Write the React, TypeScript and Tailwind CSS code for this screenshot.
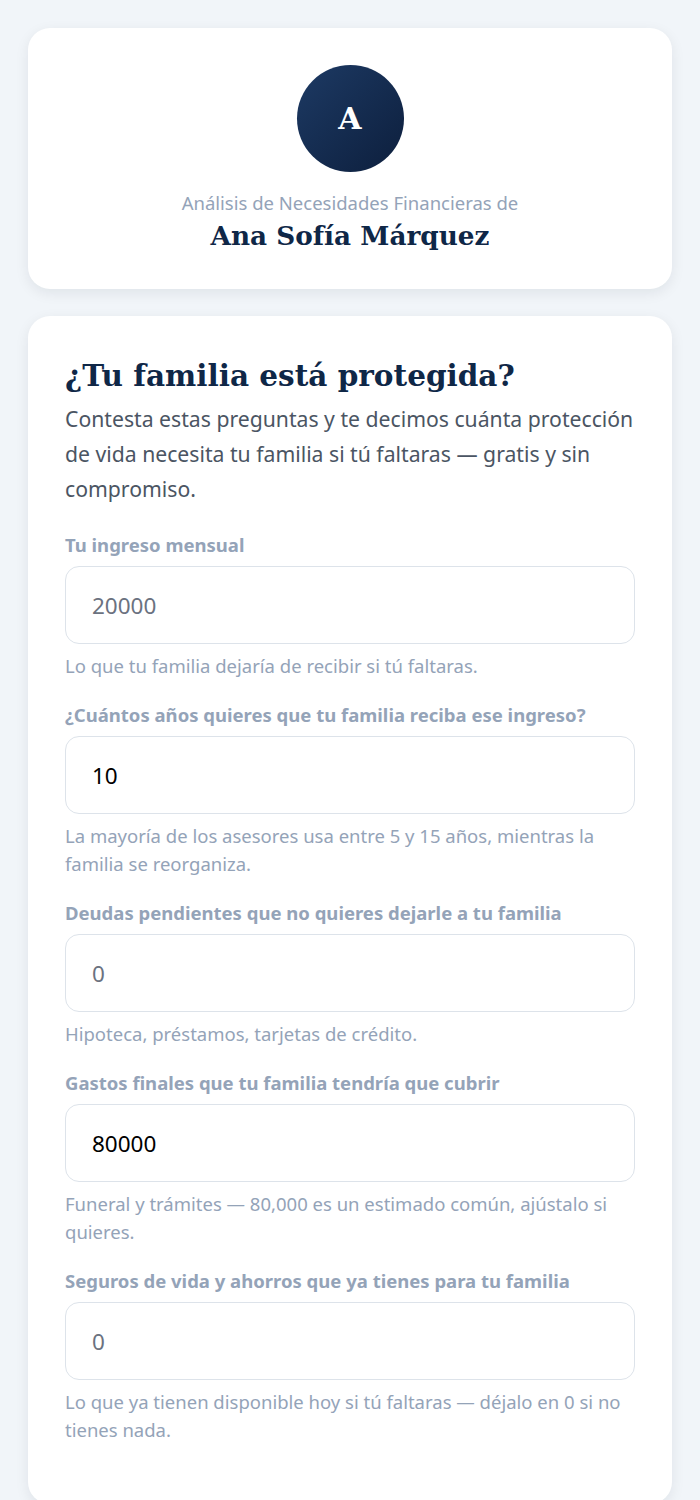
import React from "react";

const sans = "font-['Noto_Sans',sans-serif]";
const serif = "font-['DejaVu_Serif',serif]";

type Field = {
  label: string;
  value?: string;
  placeholder?: string;
  help: string;
};

const fields: Field[] = [
  { label: "Tu ingreso mensual", placeholder: "20000", help: "Lo que tu familia dejaría de recibir si tú faltaras." },
  {
    label: "¿Cuántos años quieres que tu familia reciba ese ingreso?",
    value: "10",
    help: "La mayoría de los asesores usa entre 5 y 15 años, mientras la familia se reorganiza.",
  },
  { label: "Deudas pendientes que no quieres dejarle a tu familia", placeholder: "0", help: "Hipoteca, préstamos, tarjetas de crédito." },
  {
    label: "Gastos finales que tu familia tendría que cubrir",
    value: "80000",
    help: "Funeral y trámites — 80,000 es un estimado común, ajústalo si quieres.",
  },
  {
    label: "Seguros de vida y ahorros que ya tienes para tu familia",
    placeholder: "0",
    help: "Lo que ya tienen disponible hoy si tú faltaras — déjalo en 0 si no tienes nada.",
  },
];

function FormField({ field }: { field: Field }) {
  return (
    <div>
      <label className="block text-[18.5px] font-bold leading-6 text-[#94a3b8]">{field.label}</label>
      <input
        type="text"
        defaultValue={field.value}
        placeholder={field.placeholder}
        className="mt-[9px] block h-[78px] w-full rounded-[14px] border border-[#dde3ea] bg-white px-[26px] text-[22.5px] text-black outline-none placeholder:text-[#6b7280]"
      />
      <p className="mt-[8px] text-[18.5px] leading-[28px] text-[#94a3b8]">{field.help}</p>
    </div>
  );
}

export default function App() {
  return (
    <div className={`min-h-[1500px] bg-[#f1f5f9] px-[28px] pt-[28px] ${sans}`}>
      <div className="flex flex-col items-center rounded-[22px] bg-white pb-[35px] pt-[37px] shadow-[0_4px_14px_rgba(15,23,42,0.08)]">
        <div className="flex h-[107px] w-[107px] items-center justify-center rounded-full bg-gradient-to-br from-[#1d3a64] to-[#0d1f3d]">
          <span className={`${serif} text-[30px] font-bold text-white`}>A</span>
        </div>
        <div className="mt-[19px] text-[18.5px] leading-6 text-[#94a3b8]">Análisis de Necesidades Financieras de</div>
        <div className={`${serif} mt-[3px] text-[26.3px] font-bold leading-9 text-[#0f2747]`}>Ana Sofía Márquez</div>
      </div>

      <div className="mt-[27px] rounded-[22px] bg-white px-[37px] pb-[60px] pt-[42px] shadow-[0_4px_14px_rgba(15,23,42,0.08)]">
        <h1 className={`${serif} text-[29.5px] font-bold leading-9 text-[#0f2747]`}>¿Tu familia está protegida?</h1>
        <p className="mt-[7px] text-[21.2px] leading-[35px] text-[#4b5563]">
          Contesta estas preguntas y te decimos cuánta protección de vida necesita tu familia si tú faltaras — gratis y sin compromiso.
        </p>
        <div className="mt-[27px] flex flex-col gap-[23px]">
          {fields.map((f) => (
            <FormField key={f.label} field={f} />
          ))}
        </div>
      </div>
    </div>
  );
}
